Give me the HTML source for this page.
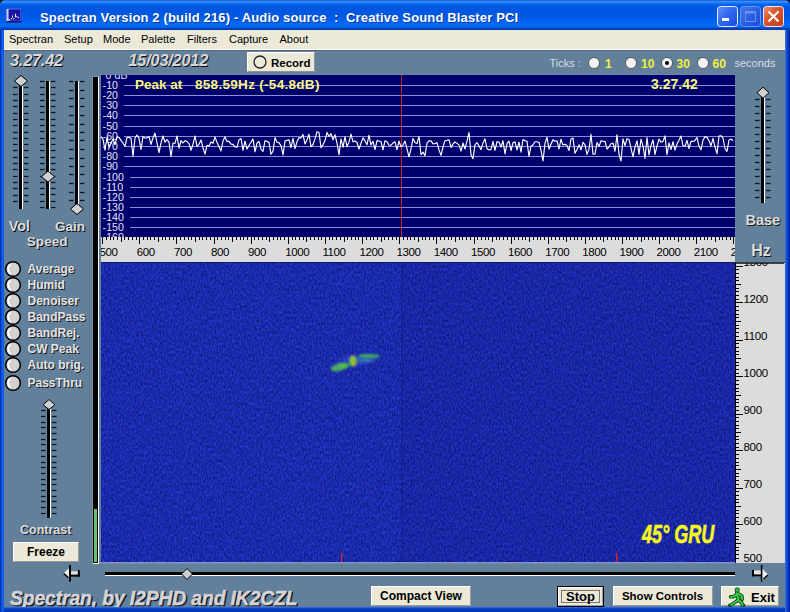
<!DOCTYPE html>
<html><head><meta charset="utf-8"><style>
html,body{margin:0;padding:0;width:790px;height:612px;overflow:hidden;background:#0a4fd8}
svg{position:absolute;left:0;top:0;display:block}
text{font-family:"Liberation Sans",sans-serif;white-space:pre}
</style></head><body>
<svg width="790" height="612" viewBox="0 0 790 612">
<defs>
<linearGradient id="tb" x1="0" y1="0" x2="0" y2="30" gradientUnits="userSpaceOnUse"><stop offset="0.0000" stop-color="#0040b8"/><stop offset="0.0333" stop-color="#3a8ff8"/><stop offset="0.0667" stop-color="#3088fc"/><stop offset="0.1000" stop-color="#1a78f8"/><stop offset="0.1333" stop-color="#0a68f0"/><stop offset="0.2000" stop-color="#005ae4"/><stop offset="0.3333" stop-color="#0056e0"/><stop offset="0.5333" stop-color="#0058e4"/><stop offset="0.6333" stop-color="#005ee8"/><stop offset="0.7333" stop-color="#0064f4"/><stop offset="0.8333" stop-color="#066afc"/><stop offset="0.8833" stop-color="#0668f8"/><stop offset="0.9167" stop-color="#0058e0"/><stop offset="0.9500" stop-color="#0044c0"/><stop offset="1.0000" stop-color="#0038a8"/></linearGradient>
<filter id="noise" x="0" y="0" width="100%" height="100%" color-interpolation-filters="sRGB">
<feTurbulence type="fractalNoise" baseFrequency="0.65 0.35" numOctaves="2" seed="5"/>
<feColorMatrix type="matrix" values="0.14 0 0 0 0.035  0.22 0 0 0 0.055  0.6 0 0 0 0.37  0 0 0 0 1"/>
</filter>
<radialGradient id="blob" cx="0.5" cy="0.5" r="0.5"><stop offset="0" stop-color="#c8d020"/><stop offset="0.5" stop-color="#40c040"/><stop offset="1" stop-color="#40c040" stop-opacity="0"/></radialGradient>
<linearGradient id="bmin" x1="0" y1="0" x2="1" y2="1"><stop offset="0" stop-color="#6894f8"/><stop offset="0.45" stop-color="#3068f0"/><stop offset="1" stop-color="#1a4ee0"/></linearGradient>
<linearGradient id="bmax" x1="0" y1="0" x2="1" y2="1"><stop offset="0" stop-color="#4a78ec"/><stop offset="0.5" stop-color="#2a5ee4"/><stop offset="1" stop-color="#1a50dc"/></linearGradient>
<linearGradient id="bcls" x1="0" y1="0" x2="1" y2="1"><stop offset="0" stop-color="#f09070"/><stop offset="0.4" stop-color="#dc5830"/><stop offset="1" stop-color="#c03c18"/></linearGradient>
<clipPath id="rrc"><rect x="736" y="263" width="50" height="300"/></clipPath><clipPath id="frc"><rect x="101" y="237" width="634" height="25"/></clipPath><clipPath id="spc"><rect x="101" y="75" width="634" height="162"/></clipPath>
</defs>
<rect x="0" y="0" width="790" height="612" fill="#0a4fd8"/>
<rect x="0" y="0" width="790" height="30" fill="url(#tb)"/>
<path d="M0,0 H4 Q1,1 0,4 Z" fill="#101830"/><path d="M790,0 H786 Q789,1 790,4 Z" fill="#101830"/>
<!-- icon -->
<rect x="6.5" y="8.5" width="14.5" height="13.5" fill="#5868d8"/>
<rect x="6.5" y="9" width="2.2" height="13" fill="#c4ccf4"/>
<rect x="8.7" y="9.6" width="11.6" height="10.8" fill="#1a12a8"/>
<rect x="6.5" y="21" width="15" height="1.5" fill="#0c1660"/>
<g fill="#fff"><rect x="8.5" y="19" width="1.3" height="1.3"/><rect x="10.8" y="18" width="1.2" height="1.2"/><rect x="12" y="15.5" width="1" height="2"/><rect x="13.3" y="18" width="1.2" height="1.2"/><rect x="15" y="13.8" width="1.1" height="3.5"/><rect x="16.3" y="16" width="1.1" height="1.2"/><rect x="17.8" y="17" width="1.2" height="1.2"/></g>
<text x="41" y="22.5" font-size="13" font-weight="bold" fill="#00207a" opacity="0.6" letter-spacing="0.15">Spectran Version 2 (build 216) - Audio source  :  Creative Sound Blaster PCI</text>
<text x="40" y="21.5" font-size="13" font-weight="bold" fill="#ffffff" letter-spacing="0.15">Spectran Version 2 (build 216) - Audio source  :  Creative Sound Blaster PCI</text>
<!-- buttons -->
<rect x="717.5" y="6.5" width="20" height="20" rx="3" fill="url(#bmin)" stroke="#e8f0ff" stroke-width="1"/>
<rect x="722" y="18" width="7" height="3" fill="#fff"/>
<rect x="740.5" y="6.5" width="20" height="20" rx="3" fill="url(#bmax)" stroke="#6c90e8" stroke-width="1"/>
<rect x="745.5" y="11.5" width="10" height="10" fill="none" stroke="#6c90e8" stroke-width="1"/><rect x="745.5" y="11.5" width="10" height="2" fill="#6c90e8"/>
<rect x="763.5" y="6.5" width="20" height="20" rx="3" fill="url(#bcls)" stroke="#f4e8e8" stroke-width="1"/>
<path d="M768.5,11.5 L778.5,21.5 M778.5,11.5 L768.5,21.5" stroke="#fff" stroke-width="2"/>
<!-- menubar -->
<rect x="4" y="30" width="782" height="20" fill="#ece9d8"/>
<g font-size="11" fill="#000">
<text x="9" y="43">Spectran</text><text x="64" y="43">Setup</text><text x="103" y="43">Mode</text><text x="141" y="43">Palette</text><text x="187" y="43">Filters</text><text x="229" y="43">Capture</text><text x="279.5" y="43">About</text>
</g>
<!-- client -->
<rect x="4" y="50" width="782" height="557" fill="#62809a"/>
<rect x="4" y="49" width="782" height="1" fill="#fcfcf8"/><rect x="4" y="50" width="782" height="1" fill="#586878"/>
<text x="11" y="67" font-size="16.3" fill="#101014" font-weight="bold" font-style="italic" letter-spacing="-0.2">3.27.42</text><text x="10" y="66" font-size="16.3" fill="#d8d8dc" font-weight="bold" font-style="italic" letter-spacing="-0.2">3.27.42</text>
<text x="129.5" y="67" font-size="16.3" fill="#101014" font-weight="bold" font-style="italic" letter-spacing="-0.2">15/03/2012</text><text x="128.5" y="66" font-size="16.3" fill="#d8d8dc" font-weight="bold" font-style="italic" letter-spacing="-0.2">15/03/2012</text>
<rect x="247" y="52" width="68" height="20" fill="#ece9d8"/>
<path d="M247.5,71.5 V52.5 H314.5" stroke="#fff" fill="none"/><path d="M247.5,71.5 H314.5 V52.5" stroke="#909090" fill="none"/>
<circle cx="260" cy="62" r="6" fill="#ece9d8" stroke="#202020" stroke-width="1.3"/>
<text x="271" y="66.5" font-size="11.5" font-weight="bold" fill="#000">Record</text>
<text x="549.5" y="67" font-size="11" fill="#d8dce4">Ticks :</text>
<g fill="#f4f4f4" stroke="#404040" stroke-width="0.8">
<circle cx="594" cy="63" r="5.5"/><circle cx="631" cy="63" r="5.5"/><circle cx="667" cy="63" r="5.5"/><circle cx="703" cy="63" r="5.5"/>
</g>
<circle cx="667" cy="63" r="2" fill="#000"/>
<g font-size="12" font-weight="bold" fill="#f0f040">
<text x="605" y="67.5">1</text><text x="641" y="67.5">10</text><text x="676.5" y="67.5">30</text><text x="712.5" y="67.5">60</text>
</g>
<text x="734.5" y="66.5" font-size="11" fill="#d8dce4">seconds</text>
<!-- left black bar -->
<rect x="92" y="76" width="7" height="488" fill="#8494a8"/>
<rect x="93" y="77" width="5" height="486" fill="#000"/>
<rect x="98" y="77" width="1" height="486" fill="#fff"/>
<rect x="93" y="563" width="6" height="1" fill="#fff"/>
<rect x="94" y="509" width="3" height="53" fill="#6cc070"/>
<!-- spectrum -->
<rect x="100" y="74" width="636" height="1" fill="#7080b4"/><rect x="734" y="75" width="1" height="162" fill="#000030"/>
<rect x="101" y="75" width="634" height="162" fill="#00006c"/>
<g stroke="#8c8cd8" stroke-width="1"><line x1="101" y1="85.5" x2="735" y2="85.5"/><line x1="101" y1="95.5" x2="735" y2="95.5"/><line x1="101" y1="105.5" x2="735" y2="105.5"/><line x1="101" y1="115.5" x2="735" y2="115.5"/><line x1="101" y1="126.5" x2="735" y2="126.5"/><line x1="101" y1="136.5" x2="735" y2="136.5"/><line x1="101" y1="146.5" x2="735" y2="146.5"/><line x1="101" y1="156.5" x2="735" y2="156.5"/><line x1="101" y1="166.5" x2="735" y2="166.5"/><line x1="101" y1="177.5" x2="735" y2="177.5"/><line x1="101" y1="187.5" x2="735" y2="187.5"/><line x1="101" y1="197.5" x2="735" y2="197.5"/><line x1="101" y1="207.5" x2="735" y2="207.5"/><line x1="101" y1="217.5" x2="735" y2="217.5"/><line x1="101" y1="227.5" x2="735" y2="227.5"/></g>
<line x1="401.5" y1="75" x2="401.5" y2="237" stroke="#c02020" stroke-width="1"/>
<g font-size="10.6" fill="#e0e0f8" clip-path="url(#spc)" letter-spacing="0.1"><rect x="101" y="70.5" width="29" height="9" fill="#00006c"/><text x="105.5" y="79.3">0 dB</text><rect x="101" y="80.5" width="23" height="9" fill="#00006c"/><text x="102.5" y="89.3">-10</text><rect x="101" y="90.5" width="23" height="9" fill="#00006c"/><text x="102.5" y="99.3">-20</text><rect x="101" y="100.5" width="23" height="9" fill="#00006c"/><text x="102.5" y="109.3">-30</text><rect x="101" y="110.5" width="23" height="9" fill="#00006c"/><text x="102.5" y="119.3">-40</text><rect x="101" y="121.5" width="23" height="9" fill="#00006c"/><text x="102.5" y="130.3">-50</text><rect x="101" y="131.5" width="23" height="9" fill="#00006c"/><text x="102.5" y="140.3">-60</text><rect x="101" y="141.5" width="23" height="9" fill="#00006c"/><text x="102.5" y="150.3">-70</text><rect x="101" y="151.5" width="23" height="9" fill="#00006c"/><text x="102.5" y="160.3">-80</text><rect x="101" y="161.5" width="23" height="9" fill="#00006c"/><text x="102.5" y="170.3">-90</text><rect x="101" y="172.5" width="29" height="9" fill="#00006c"/><text x="102.5" y="181.3">-100</text><rect x="101" y="182.5" width="29" height="9" fill="#00006c"/><text x="102.5" y="191.3">-110</text><rect x="101" y="192.5" width="29" height="9" fill="#00006c"/><text x="102.5" y="201.3">-120</text><rect x="101" y="202.5" width="29" height="9" fill="#00006c"/><text x="102.5" y="211.3">-130</text><rect x="101" y="212.5" width="29" height="9" fill="#00006c"/><text x="102.5" y="221.3">-140</text><rect x="101" y="222.5" width="29" height="9" fill="#00006c"/><text x="102.5" y="231.3">-150</text><rect x="101" y="232.5" width="29" height="9" fill="#00006c"/><text x="102.5" y="241.3">-160</text></g>
<polyline points="101.0,136.6 103.0,139.4 105.0,150.1 107.0,137.3 109.0,147.2 111.0,143.3 113.0,138.9 115.0,144.8 117.0,136.8 119.0,137.4 121.0,140.4 123.0,143.2 125.0,146.2 127.0,137.5 129.0,137.4 131.0,138.2 133.0,156.3 135.0,138.0 137.0,135.1 139.0,138.3 141.0,149.5 143.0,136.7 145.0,138.1 147.0,137.8 149.0,136.7 151.0,144.4 153.0,138.0 155.0,133.2 157.0,143.0 159.0,152.6 161.0,142.9 163.0,136.0 165.0,142.2 167.0,139.5 169.0,142.1 171.0,156.4 173.0,143.0 175.0,143.3 177.0,136.0 179.0,148.2 181.0,140.5 183.0,143.0 185.0,140.6 187.0,141.7 189.0,143.6 191.0,150.3 193.0,144.2 195.0,136.0 197.0,146.3 199.0,144.3 201.0,139.9 203.0,147.7 205.0,154.1 207.0,145.3 209.0,146.0 211.0,142.0 213.0,143.3 215.0,137.0 217.0,142.4 219.0,146.6 221.0,151.0 223.0,141.0 225.0,136.8 227.0,141.4 229.0,141.3 231.0,144.2 233.0,144.4 235.0,146.9 237.0,147.2 239.0,139.9 241.0,138.5 243.0,150.4 245.0,141.2 247.0,149.1 249.0,145.4 251.0,142.3 253.0,138.9 255.0,151.8 257.0,143.0 259.0,141.5 261.0,149.1 263.0,151.5 265.0,140.5 267.0,141.6 269.0,142.4 271.0,154.3 273.0,151.1 275.0,137.6 277.0,141.9 279.0,142.8 281.0,145.7 283.0,154.9 285.0,141.1 287.0,140.3 289.0,139.9 291.0,147.5 293.0,138.4 295.0,148.6 297.0,141.8 299.0,137.7 301.0,137.9 303.0,134.6 305.0,143.9 307.0,139.8 309.0,134.3 311.0,146.8 313.0,144.5 315.0,138.9 317.0,131.7 319.0,132.6 321.0,147.7 323.0,144.6 325.0,140.8 327.0,132.4 329.0,136.5 331.0,133.7 333.0,139.9 335.0,134.7 337.0,143.1 339.0,154.7 341.0,138.8 343.0,147.1 345.0,136.8 347.0,146.6 349.0,142.2 351.0,134.1 353.0,141.8 355.0,141.0 357.0,142.5 359.0,149.0 361.0,143.2 363.0,137.9 365.0,140.9 367.0,144.7 369.0,135.3 371.0,145.1 373.0,141.3 375.0,149.6 377.0,140.6 379.0,141.0 381.0,141.5 383.0,149.8 385.0,140.7 387.0,141.8 389.0,145.2 391.0,145.1 393.0,143.1 395.0,141.8 397.0,149.6 399.0,141.1 401.0,146.8 403.0,145.1 405.0,141.0 407.0,148.8 409.0,156.9 411.0,148.9 413.0,138.6 415.0,142.6 417.0,143.6 419.0,136.3 421.0,154.7 423.0,152.1 425.0,155.6 427.0,143.2 429.0,140.9 431.0,140.9 433.0,143.8 435.0,143.7 437.0,142.6 439.0,149.9 441.0,155.4 443.0,147.0 445.0,140.7 447.0,140.3 449.0,139.7 451.0,147.4 453.0,144.0 455.0,142.0 457.0,143.4 459.0,144.9 461.0,151.1 463.0,143.0 465.0,149.0 467.0,141.1 469.0,132.5 471.0,154.7 473.0,158.7 475.0,144.6 477.0,142.6 479.0,146.0 481.0,149.6 483.0,143.0 485.0,138.8 487.0,148.8 489.0,150.0 491.0,149.4 493.0,141.5 495.0,150.3 497.0,141.6 499.0,142.2 501.0,147.0 503.0,140.8 505.0,153.9 507.0,143.6 509.0,141.2 511.0,150.5 513.0,142.6 515.0,141.8 517.0,149.9 519.0,142.2 521.0,152.2 523.0,139.5 525.0,140.8 527.0,141.4 529.0,156.5 531.0,146.2 533.0,144.8 535.0,141.7 537.0,141.7 539.0,142.5 541.0,150.4 543.0,161.0 545.0,143.4 547.0,137.3 549.0,149.2 551.0,144.0 553.0,139.7 555.0,141.2 557.0,140.8 559.0,149.0 561.0,139.2 563.0,145.1 565.0,144.2 567.0,145.5 569.0,150.5 571.0,139.0 573.0,138.1 575.0,153.3 577.0,149.4 579.0,144.8 581.0,149.8 583.0,142.3 585.0,144.9 587.0,154.3 589.0,149.4 591.0,134.4 593.0,154.1 595.0,154.0 597.0,142.6 599.0,146.3 601.0,140.9 603.0,141.3 605.0,141.4 607.0,149.1 609.0,146.8 611.0,143.8 613.0,143.0 615.0,151.3 617.0,134.9 619.0,154.3 621.0,161.0 623.0,138.9 625.0,145.7 627.0,138.7 629.0,139.5 631.0,148.1 633.0,156.8 635.0,147.2 637.0,140.8 639.0,154.4 641.0,139.2 643.0,146.2 645.0,158.5 647.0,137.5 649.0,154.8 651.0,145.5 653.0,139.9 655.0,154.4 657.0,145.9 659.0,139.1 661.0,142.2 663.0,141.4 665.0,135.9 667.0,154.7 669.0,142.8 671.0,149.5 673.0,141.7 675.0,150.1 677.0,144.0 679.0,140.2 681.0,136.0 683.0,145.8 685.0,146.2 687.0,140.4 689.0,148.5 691.0,141.3 693.0,141.4 695.0,140.4 697.0,137.5 699.0,146.3 701.0,149.7 703.0,140.2 705.0,136.6 707.0,137.4 709.0,140.8 711.0,145.8 713.0,138.3 715.0,146.9 717.0,153.6 719.0,136.0 721.0,135.7 723.0,138.2 725.0,148.5 727.0,151.3 729.0,139.9 731.0,139.0 733.0,140.9" fill="none" stroke="#fff" stroke-width="1.15" stroke-linejoin="round"/>
<text x="135" y="89" font-size="13.5" font-weight="bold" fill="#f8f880">Peak at</text>
<text x="195" y="89" font-size="13.5" font-weight="bold" fill="#f8f880" letter-spacing="0.3">858.59Hz (-54.8dB)</text>
<text x="651" y="89" font-size="14" font-weight="bold" fill="#f8f880">3.27.42</text>
<!-- freq ruler -->
<rect x="101" y="237" width="634" height="25" fill="#dcdcdc"/>
<g stroke="#000" stroke-width="1"><line x1="102.5" y1="237" x2="102.5" y2="244"/><line x1="106.5" y1="237" x2="106.5" y2="240"/><line x1="110.5" y1="237" x2="110.5" y2="240"/><line x1="113.5" y1="237" x2="113.5" y2="240"/><line x1="117.5" y1="237" x2="117.5" y2="240"/><line x1="121.5" y1="237" x2="121.5" y2="242"/><line x1="124.5" y1="237" x2="124.5" y2="240"/><line x1="128.5" y1="237" x2="128.5" y2="240"/><line x1="132.5" y1="237" x2="132.5" y2="240"/><line x1="136.5" y1="237" x2="136.5" y2="240"/><line x1="139.5" y1="237" x2="139.5" y2="244"/><line x1="143.5" y1="237" x2="143.5" y2="240"/><line x1="147.5" y1="237" x2="147.5" y2="240"/><line x1="150.5" y1="237" x2="150.5" y2="240"/><line x1="154.5" y1="237" x2="154.5" y2="240"/><line x1="158.5" y1="237" x2="158.5" y2="242"/><line x1="162.5" y1="237" x2="162.5" y2="240"/><line x1="165.5" y1="237" x2="165.5" y2="240"/><line x1="169.5" y1="237" x2="169.5" y2="240"/><line x1="173.5" y1="237" x2="173.5" y2="240"/><line x1="176.5" y1="237" x2="176.5" y2="244"/><line x1="180.5" y1="237" x2="180.5" y2="240"/><line x1="184.5" y1="237" x2="184.5" y2="240"/><line x1="188.5" y1="237" x2="188.5" y2="240"/><line x1="191.5" y1="237" x2="191.5" y2="240"/><line x1="195.5" y1="237" x2="195.5" y2="242"/><line x1="199.5" y1="237" x2="199.5" y2="240"/><line x1="202.5" y1="237" x2="202.5" y2="240"/><line x1="206.5" y1="237" x2="206.5" y2="240"/><line x1="210.5" y1="237" x2="210.5" y2="240"/><line x1="214.5" y1="237" x2="214.5" y2="244"/><line x1="217.5" y1="237" x2="217.5" y2="240"/><line x1="221.5" y1="237" x2="221.5" y2="240"/><line x1="225.5" y1="237" x2="225.5" y2="240"/><line x1="228.5" y1="237" x2="228.5" y2="240"/><line x1="232.5" y1="237" x2="232.5" y2="242"/><line x1="236.5" y1="237" x2="236.5" y2="240"/><line x1="240.5" y1="237" x2="240.5" y2="240"/><line x1="243.5" y1="237" x2="243.5" y2="240"/><line x1="247.5" y1="237" x2="247.5" y2="240"/><line x1="251.5" y1="237" x2="251.5" y2="244"/><line x1="254.5" y1="237" x2="254.5" y2="240"/><line x1="258.5" y1="237" x2="258.5" y2="240"/><line x1="262.5" y1="237" x2="262.5" y2="240"/><line x1="266.5" y1="237" x2="266.5" y2="240"/><line x1="269.5" y1="237" x2="269.5" y2="242"/><line x1="273.5" y1="237" x2="273.5" y2="240"/><line x1="277.5" y1="237" x2="277.5" y2="240"/><line x1="280.5" y1="237" x2="280.5" y2="240"/><line x1="284.5" y1="237" x2="284.5" y2="240"/><line x1="288.5" y1="237" x2="288.5" y2="244"/><line x1="292.5" y1="237" x2="292.5" y2="240"/><line x1="295.5" y1="237" x2="295.5" y2="240"/><line x1="299.5" y1="237" x2="299.5" y2="240"/><line x1="303.5" y1="237" x2="303.5" y2="240"/><line x1="306.5" y1="237" x2="306.5" y2="242"/><line x1="310.5" y1="237" x2="310.5" y2="240"/><line x1="314.5" y1="237" x2="314.5" y2="240"/><line x1="318.5" y1="237" x2="318.5" y2="240"/><line x1="321.5" y1="237" x2="321.5" y2="240"/><line x1="325.5" y1="237" x2="325.5" y2="244"/><line x1="329.5" y1="237" x2="329.5" y2="240"/><line x1="332.5" y1="237" x2="332.5" y2="240"/><line x1="336.5" y1="237" x2="336.5" y2="240"/><line x1="340.5" y1="237" x2="340.5" y2="240"/><line x1="344.5" y1="237" x2="344.5" y2="242"/><line x1="347.5" y1="237" x2="347.5" y2="240"/><line x1="351.5" y1="237" x2="351.5" y2="240"/><line x1="355.5" y1="237" x2="355.5" y2="240"/><line x1="358.5" y1="237" x2="358.5" y2="240"/><line x1="362.5" y1="237" x2="362.5" y2="244"/><line x1="366.5" y1="237" x2="366.5" y2="240"/><line x1="370.5" y1="237" x2="370.5" y2="240"/><line x1="373.5" y1="237" x2="373.5" y2="240"/><line x1="377.5" y1="237" x2="377.5" y2="240"/><line x1="381.5" y1="237" x2="381.5" y2="242"/><line x1="384.5" y1="237" x2="384.5" y2="240"/><line x1="388.5" y1="237" x2="388.5" y2="240"/><line x1="392.5" y1="237" x2="392.5" y2="240"/><line x1="396.5" y1="237" x2="396.5" y2="240"/><line x1="399.5" y1="237" x2="399.5" y2="244"/><line x1="403.5" y1="237" x2="403.5" y2="240"/><line x1="407.5" y1="237" x2="407.5" y2="240"/><line x1="410.5" y1="237" x2="410.5" y2="240"/><line x1="414.5" y1="237" x2="414.5" y2="240"/><line x1="418.5" y1="237" x2="418.5" y2="242"/><line x1="422.5" y1="237" x2="422.5" y2="240"/><line x1="425.5" y1="237" x2="425.5" y2="240"/><line x1="429.5" y1="237" x2="429.5" y2="240"/><line x1="433.5" y1="237" x2="433.5" y2="240"/><line x1="436.5" y1="237" x2="436.5" y2="244"/><line x1="440.5" y1="237" x2="440.5" y2="240"/><line x1="444.5" y1="237" x2="444.5" y2="240"/><line x1="448.5" y1="237" x2="448.5" y2="240"/><line x1="451.5" y1="237" x2="451.5" y2="240"/><line x1="455.5" y1="237" x2="455.5" y2="242"/><line x1="459.5" y1="237" x2="459.5" y2="240"/><line x1="462.5" y1="237" x2="462.5" y2="240"/><line x1="466.5" y1="237" x2="466.5" y2="240"/><line x1="470.5" y1="237" x2="470.5" y2="240"/><line x1="474.5" y1="237" x2="474.5" y2="244"/><line x1="477.5" y1="237" x2="477.5" y2="240"/><line x1="481.5" y1="237" x2="481.5" y2="240"/><line x1="485.5" y1="237" x2="485.5" y2="240"/><line x1="488.5" y1="237" x2="488.5" y2="240"/><line x1="492.5" y1="237" x2="492.5" y2="242"/><line x1="496.5" y1="237" x2="496.5" y2="240"/><line x1="499.5" y1="237" x2="499.5" y2="240"/><line x1="503.5" y1="237" x2="503.5" y2="240"/><line x1="507.5" y1="237" x2="507.5" y2="240"/><line x1="511.5" y1="237" x2="511.5" y2="244"/><line x1="514.5" y1="237" x2="514.5" y2="240"/><line x1="518.5" y1="237" x2="518.5" y2="240"/><line x1="522.5" y1="237" x2="522.5" y2="240"/><line x1="525.5" y1="237" x2="525.5" y2="240"/><line x1="529.5" y1="237" x2="529.5" y2="242"/><line x1="533.5" y1="237" x2="533.5" y2="240"/><line x1="537.5" y1="237" x2="537.5" y2="240"/><line x1="540.5" y1="237" x2="540.5" y2="240"/><line x1="544.5" y1="237" x2="544.5" y2="240"/><line x1="548.5" y1="237" x2="548.5" y2="244"/><line x1="551.5" y1="237" x2="551.5" y2="240"/><line x1="555.5" y1="237" x2="555.5" y2="240"/><line x1="559.5" y1="237" x2="559.5" y2="240"/><line x1="563.5" y1="237" x2="563.5" y2="240"/><line x1="566.5" y1="237" x2="566.5" y2="242"/><line x1="570.5" y1="237" x2="570.5" y2="240"/><line x1="574.5" y1="237" x2="574.5" y2="240"/><line x1="577.5" y1="237" x2="577.5" y2="240"/><line x1="581.5" y1="237" x2="581.5" y2="240"/><line x1="585.5" y1="237" x2="585.5" y2="244"/><line x1="589.5" y1="237" x2="589.5" y2="240"/><line x1="592.5" y1="237" x2="592.5" y2="240"/><line x1="596.5" y1="237" x2="596.5" y2="240"/><line x1="600.5" y1="237" x2="600.5" y2="240"/><line x1="603.5" y1="237" x2="603.5" y2="242"/><line x1="607.5" y1="237" x2="607.5" y2="240"/><line x1="611.5" y1="237" x2="611.5" y2="240"/><line x1="615.5" y1="237" x2="615.5" y2="240"/><line x1="618.5" y1="237" x2="618.5" y2="240"/><line x1="622.5" y1="237" x2="622.5" y2="244"/><line x1="626.5" y1="237" x2="626.5" y2="240"/><line x1="629.5" y1="237" x2="629.5" y2="240"/><line x1="633.5" y1="237" x2="633.5" y2="240"/><line x1="637.5" y1="237" x2="637.5" y2="240"/><line x1="641.5" y1="237" x2="641.5" y2="242"/><line x1="644.5" y1="237" x2="644.5" y2="240"/><line x1="648.5" y1="237" x2="648.5" y2="240"/><line x1="652.5" y1="237" x2="652.5" y2="240"/><line x1="655.5" y1="237" x2="655.5" y2="240"/><line x1="659.5" y1="237" x2="659.5" y2="244"/><line x1="663.5" y1="237" x2="663.5" y2="240"/><line x1="667.5" y1="237" x2="667.5" y2="240"/><line x1="670.5" y1="237" x2="670.5" y2="240"/><line x1="674.5" y1="237" x2="674.5" y2="240"/><line x1="678.5" y1="237" x2="678.5" y2="242"/><line x1="681.5" y1="237" x2="681.5" y2="240"/><line x1="685.5" y1="237" x2="685.5" y2="240"/><line x1="689.5" y1="237" x2="689.5" y2="240"/><line x1="693.5" y1="237" x2="693.5" y2="240"/><line x1="696.5" y1="237" x2="696.5" y2="244"/><line x1="700.5" y1="237" x2="700.5" y2="240"/><line x1="704.5" y1="237" x2="704.5" y2="240"/><line x1="707.5" y1="237" x2="707.5" y2="240"/><line x1="711.5" y1="237" x2="711.5" y2="240"/><line x1="715.5" y1="237" x2="715.5" y2="242"/><line x1="719.5" y1="237" x2="719.5" y2="240"/><line x1="722.5" y1="237" x2="722.5" y2="240"/><line x1="726.5" y1="237" x2="726.5" y2="240"/><line x1="730.5" y1="237" x2="730.5" y2="240"/><line x1="733.5" y1="237" x2="733.5" y2="244"/></g>
<g font-size="11.5" fill="#000" clip-path="url(#frc)" letter-spacing="-0.4"><text x="99.6" y="256">500</text><text x="136.7" y="256">600</text><text x="173.9" y="256">700</text><text x="211.0" y="256">800</text><text x="248.1" y="256">900</text><text x="285.2" y="256">1000</text><text x="322.4" y="256">1100</text><text x="359.5" y="256">1200</text><text x="396.6" y="256">1300</text><text x="433.8" y="256">1400</text><text x="470.9" y="256">1500</text><text x="508.0" y="256">1600</text><text x="545.2" y="256">1700</text><text x="582.3" y="256">1800</text><text x="619.4" y="256">1900</text><text x="656.6" y="256">2000</text><text x="693.7" y="256">2100</text><text x="730.8" y="256">2200</text></g>
<!-- waterfall -->
<rect x="101" y="262" width="634" height="300" fill="#2236c0" filter="url(#noise)"/>
<rect x="401" y="262" width="334" height="300" fill="#000040" opacity="0.06"/>
<rect x="101" y="262" width="634" height="1" fill="#10186a"/>
<rect x="401" y="262" width="2" height="300" fill="#101a80" opacity="0.35"/>
<filter id="blur1" x="-50%" y="-100%" width="200%" height="300%"><feGaussianBlur stdDeviation="1.2"/></filter>
<g filter="url(#blur1)">
<ellipse cx="358" cy="360" rx="22" ry="6" fill="#3a78e0" opacity="0.25" transform="rotate(-8 358 360)"/>
<ellipse cx="340" cy="367" rx="9.5" ry="3.6" fill="#58c840" opacity="0.9" transform="rotate(-14 340 367)"/>
<ellipse cx="337" cy="368" rx="2" ry="1.2" fill="#3070c0" opacity="0.6"/>
<ellipse cx="369" cy="356" rx="11" ry="1.7" fill="#48c040" opacity="0.9"/>
<ellipse cx="365" cy="360.5" rx="9" ry="1.4" fill="#40b8a0" opacity="0.6"/>
<ellipse cx="353" cy="361" rx="3.8" ry="5.5" fill="#70c838"/>
<circle cx="352" cy="357.5" r="1.6" fill="#e0a030"/>
<circle cx="354.5" cy="364" r="1.6" fill="#d89030"/>
</g>
<rect x="100" y="562" width="636" height="1.5" fill="#8890c8"/>
<rect x="341" y="553" width="1.5" height="9" fill="#d02030"/>
<rect x="616" y="553" width="1.5" height="9" fill="#d02030"/>
<text x="642" y="543" font-size="25" font-weight="bold" font-style="italic" fill="#f8f818" stroke="#f8f818" stroke-width="0.6" transform="translate(642 0) scale(0.72 1) translate(-642 0)">45° GRU</text>
<!-- right ruler -->
<rect x="735" y="263" width="49" height="300" fill="#dcdcdc"/>
<rect x="735" y="263" width="1" height="300" fill="#000"/>
<g stroke="#000" stroke-width="1"><line x1="736" y1="266.5" x2="743" y2="266.5"/><line x1="736" y1="269.5" x2="739" y2="269.5"/><line x1="736" y1="273.5" x2="739" y2="273.5"/><line x1="736" y1="277.5" x2="739" y2="277.5"/><line x1="736" y1="280.5" x2="739" y2="280.5"/><line x1="736" y1="284.5" x2="741" y2="284.5"/><line x1="736" y1="288.5" x2="739" y2="288.5"/><line x1="736" y1="291.5" x2="739" y2="291.5"/><line x1="736" y1="295.5" x2="739" y2="295.5"/><line x1="736" y1="299.5" x2="739" y2="299.5"/><line x1="736" y1="302.5" x2="743" y2="302.5"/><line x1="736" y1="306.5" x2="739" y2="306.5"/><line x1="736" y1="310.5" x2="739" y2="310.5"/><line x1="736" y1="314.5" x2="739" y2="314.5"/><line x1="736" y1="317.5" x2="739" y2="317.5"/><line x1="736" y1="321.5" x2="741" y2="321.5"/><line x1="736" y1="325.5" x2="739" y2="325.5"/><line x1="736" y1="328.5" x2="739" y2="328.5"/><line x1="736" y1="332.5" x2="739" y2="332.5"/><line x1="736" y1="336.5" x2="739" y2="336.5"/><line x1="736" y1="340.5" x2="743" y2="340.5"/><line x1="736" y1="343.5" x2="739" y2="343.5"/><line x1="736" y1="347.5" x2="739" y2="347.5"/><line x1="736" y1="351.5" x2="739" y2="351.5"/><line x1="736" y1="354.5" x2="739" y2="354.5"/><line x1="736" y1="358.5" x2="741" y2="358.5"/><line x1="736" y1="362.5" x2="739" y2="362.5"/><line x1="736" y1="365.5" x2="739" y2="365.5"/><line x1="736" y1="369.5" x2="739" y2="369.5"/><line x1="736" y1="373.5" x2="739" y2="373.5"/><line x1="736" y1="376.5" x2="743" y2="376.5"/><line x1="736" y1="380.5" x2="739" y2="380.5"/><line x1="736" y1="384.5" x2="739" y2="384.5"/><line x1="736" y1="388.5" x2="739" y2="388.5"/><line x1="736" y1="391.5" x2="739" y2="391.5"/><line x1="736" y1="395.5" x2="741" y2="395.5"/><line x1="736" y1="399.5" x2="739" y2="399.5"/><line x1="736" y1="402.5" x2="739" y2="402.5"/><line x1="736" y1="406.5" x2="739" y2="406.5"/><line x1="736" y1="410.5" x2="739" y2="410.5"/><line x1="736" y1="414.5" x2="743" y2="414.5"/><line x1="736" y1="417.5" x2="739" y2="417.5"/><line x1="736" y1="421.5" x2="739" y2="421.5"/><line x1="736" y1="425.5" x2="739" y2="425.5"/><line x1="736" y1="428.5" x2="739" y2="428.5"/><line x1="736" y1="432.5" x2="741" y2="432.5"/><line x1="736" y1="436.5" x2="739" y2="436.5"/><line x1="736" y1="439.5" x2="739" y2="439.5"/><line x1="736" y1="443.5" x2="739" y2="443.5"/><line x1="736" y1="447.5" x2="739" y2="447.5"/><line x1="736" y1="450.5" x2="743" y2="450.5"/><line x1="736" y1="454.5" x2="739" y2="454.5"/><line x1="736" y1="458.5" x2="739" y2="458.5"/><line x1="736" y1="462.5" x2="739" y2="462.5"/><line x1="736" y1="465.5" x2="739" y2="465.5"/><line x1="736" y1="469.5" x2="741" y2="469.5"/><line x1="736" y1="473.5" x2="739" y2="473.5"/><line x1="736" y1="476.5" x2="739" y2="476.5"/><line x1="736" y1="480.5" x2="739" y2="480.5"/><line x1="736" y1="484.5" x2="739" y2="484.5"/><line x1="736" y1="488.5" x2="743" y2="488.5"/><line x1="736" y1="491.5" x2="739" y2="491.5"/><line x1="736" y1="495.5" x2="739" y2="495.5"/><line x1="736" y1="499.5" x2="739" y2="499.5"/><line x1="736" y1="502.5" x2="739" y2="502.5"/><line x1="736" y1="506.5" x2="741" y2="506.5"/><line x1="736" y1="510.5" x2="739" y2="510.5"/><line x1="736" y1="513.5" x2="739" y2="513.5"/><line x1="736" y1="517.5" x2="739" y2="517.5"/><line x1="736" y1="521.5" x2="739" y2="521.5"/><line x1="736" y1="524.5" x2="743" y2="524.5"/><line x1="736" y1="528.5" x2="739" y2="528.5"/><line x1="736" y1="532.5" x2="739" y2="532.5"/><line x1="736" y1="536.5" x2="739" y2="536.5"/><line x1="736" y1="539.5" x2="739" y2="539.5"/><line x1="736" y1="543.5" x2="741" y2="543.5"/><line x1="736" y1="547.5" x2="739" y2="547.5"/><line x1="736" y1="550.5" x2="739" y2="550.5"/><line x1="736" y1="554.5" x2="739" y2="554.5"/><line x1="736" y1="558.5" x2="739" y2="558.5"/></g>
<g font-size="11.5" fill="#000" clip-path="url(#rrc)" letter-spacing="-0.3"><text x="743.5" y="266.0">1300</text><text x="743.5" y="303.0">1200</text><text x="743.5" y="340.0">1100</text><text x="743.5" y="377.0">1000</text><text x="743.5" y="414.0">900</text><text x="743.5" y="451.0">800</text><text x="743.5" y="488.0">700</text><text x="743.5" y="525.0">600</text><text x="743.5" y="562.0">500</text></g>
<rect x="735" y="250" width="51" height="13" fill="#62809a"/>
<rect x="735" y="262.5" width="50" height="1.2" fill="#000"/>
<!-- sliders -->
<g stroke="#0c1424" stroke-width="1.3"><line x1="13" y1="87.5" x2="17.5" y2="87.5"/><line x1="24" y1="87.5" x2="28.5" y2="87.5"/><line x1="13" y1="94.5" x2="17.5" y2="94.5"/><line x1="24" y1="94.5" x2="28.5" y2="94.5"/><line x1="13" y1="100.5" x2="17.5" y2="100.5"/><line x1="24" y1="100.5" x2="28.5" y2="100.5"/><line x1="13" y1="106.5" x2="17.5" y2="106.5"/><line x1="24" y1="106.5" x2="28.5" y2="106.5"/><line x1="13" y1="113.5" x2="17.5" y2="113.5"/><line x1="24" y1="113.5" x2="28.5" y2="113.5"/><line x1="13" y1="119.5" x2="17.5" y2="119.5"/><line x1="24" y1="119.5" x2="28.5" y2="119.5"/><line x1="13" y1="125.5" x2="17.5" y2="125.5"/><line x1="24" y1="125.5" x2="28.5" y2="125.5"/><line x1="13" y1="132.5" x2="17.5" y2="132.5"/><line x1="24" y1="132.5" x2="28.5" y2="132.5"/><line x1="13" y1="138.5" x2="17.5" y2="138.5"/><line x1="24" y1="138.5" x2="28.5" y2="138.5"/><line x1="13" y1="144.5" x2="17.5" y2="144.5"/><line x1="24" y1="144.5" x2="28.5" y2="144.5"/><line x1="13" y1="150.5" x2="17.5" y2="150.5"/><line x1="24" y1="150.5" x2="28.5" y2="150.5"/><line x1="13" y1="157.5" x2="17.5" y2="157.5"/><line x1="24" y1="157.5" x2="28.5" y2="157.5"/><line x1="13" y1="163.5" x2="17.5" y2="163.5"/><line x1="24" y1="163.5" x2="28.5" y2="163.5"/><line x1="13" y1="169.5" x2="17.5" y2="169.5"/><line x1="24" y1="169.5" x2="28.5" y2="169.5"/><line x1="13" y1="176.5" x2="17.5" y2="176.5"/><line x1="24" y1="176.5" x2="28.5" y2="176.5"/><line x1="13" y1="182.5" x2="17.5" y2="182.5"/><line x1="24" y1="182.5" x2="28.5" y2="182.5"/><line x1="13" y1="188.5" x2="17.5" y2="188.5"/><line x1="24" y1="188.5" x2="28.5" y2="188.5"/><line x1="13" y1="195.5" x2="17.5" y2="195.5"/><line x1="24" y1="195.5" x2="28.5" y2="195.5"/><line x1="13" y1="201.5" x2="17.5" y2="201.5"/><line x1="24" y1="201.5" x2="28.5" y2="201.5"/><line x1="40" y1="81.5" x2="44.5" y2="81.5"/><line x1="51" y1="81.5" x2="55.5" y2="81.5"/><line x1="40" y1="87.5" x2="44.5" y2="87.5"/><line x1="51" y1="87.5" x2="55.5" y2="87.5"/><line x1="40" y1="94.5" x2="44.5" y2="94.5"/><line x1="51" y1="94.5" x2="55.5" y2="94.5"/><line x1="40" y1="100.5" x2="44.5" y2="100.5"/><line x1="51" y1="100.5" x2="55.5" y2="100.5"/><line x1="40" y1="106.5" x2="44.5" y2="106.5"/><line x1="51" y1="106.5" x2="55.5" y2="106.5"/><line x1="40" y1="112.5" x2="44.5" y2="112.5"/><line x1="51" y1="112.5" x2="55.5" y2="112.5"/><line x1="40" y1="119.5" x2="44.5" y2="119.5"/><line x1="51" y1="119.5" x2="55.5" y2="119.5"/><line x1="40" y1="125.5" x2="44.5" y2="125.5"/><line x1="51" y1="125.5" x2="55.5" y2="125.5"/><line x1="40" y1="131.5" x2="44.5" y2="131.5"/><line x1="51" y1="131.5" x2="55.5" y2="131.5"/><line x1="40" y1="138.5" x2="44.5" y2="138.5"/><line x1="51" y1="138.5" x2="55.5" y2="138.5"/><line x1="40" y1="144.5" x2="44.5" y2="144.5"/><line x1="51" y1="144.5" x2="55.5" y2="144.5"/><line x1="40" y1="150.5" x2="44.5" y2="150.5"/><line x1="51" y1="150.5" x2="55.5" y2="150.5"/><line x1="40" y1="157.5" x2="44.5" y2="157.5"/><line x1="51" y1="157.5" x2="55.5" y2="157.5"/><line x1="40" y1="163.5" x2="44.5" y2="163.5"/><line x1="51" y1="163.5" x2="55.5" y2="163.5"/><line x1="40" y1="169.5" x2="44.5" y2="169.5"/><line x1="51" y1="169.5" x2="55.5" y2="169.5"/><line x1="40" y1="176.5" x2="44.5" y2="176.5"/><line x1="51" y1="176.5" x2="55.5" y2="176.5"/><line x1="40" y1="182.5" x2="44.5" y2="182.5"/><line x1="51" y1="182.5" x2="55.5" y2="182.5"/><line x1="40" y1="188.5" x2="44.5" y2="188.5"/><line x1="51" y1="188.5" x2="55.5" y2="188.5"/><line x1="40" y1="194.5" x2="44.5" y2="194.5"/><line x1="51" y1="194.5" x2="55.5" y2="194.5"/><line x1="40" y1="201.5" x2="44.5" y2="201.5"/><line x1="51" y1="201.5" x2="55.5" y2="201.5"/><line x1="40" y1="207.5" x2="44.5" y2="207.5"/><line x1="51" y1="207.5" x2="55.5" y2="207.5"/><line x1="69" y1="81.5" x2="73.5" y2="81.5"/><line x1="80" y1="81.5" x2="84.5" y2="81.5"/><line x1="69" y1="90.5" x2="73.5" y2="90.5"/><line x1="80" y1="90.5" x2="84.5" y2="90.5"/><line x1="69" y1="98.5" x2="73.5" y2="98.5"/><line x1="80" y1="98.5" x2="84.5" y2="98.5"/><line x1="69" y1="106.5" x2="73.5" y2="106.5"/><line x1="80" y1="106.5" x2="84.5" y2="106.5"/><line x1="69" y1="115.5" x2="73.5" y2="115.5"/><line x1="80" y1="115.5" x2="84.5" y2="115.5"/><line x1="69" y1="124.5" x2="73.5" y2="124.5"/><line x1="80" y1="124.5" x2="84.5" y2="124.5"/><line x1="69" y1="132.5" x2="73.5" y2="132.5"/><line x1="80" y1="132.5" x2="84.5" y2="132.5"/><line x1="69" y1="140.5" x2="73.5" y2="140.5"/><line x1="80" y1="140.5" x2="84.5" y2="140.5"/><line x1="69" y1="149.5" x2="73.5" y2="149.5"/><line x1="80" y1="149.5" x2="84.5" y2="149.5"/><line x1="69" y1="158.5" x2="73.5" y2="158.5"/><line x1="80" y1="158.5" x2="84.5" y2="158.5"/><line x1="69" y1="166.5" x2="73.5" y2="166.5"/><line x1="80" y1="166.5" x2="84.5" y2="166.5"/><line x1="69" y1="174.5" x2="73.5" y2="174.5"/><line x1="80" y1="174.5" x2="84.5" y2="174.5"/><line x1="69" y1="183.5" x2="73.5" y2="183.5"/><line x1="80" y1="183.5" x2="84.5" y2="183.5"/><line x1="69" y1="192.5" x2="73.5" y2="192.5"/><line x1="80" y1="192.5" x2="84.5" y2="192.5"/><line x1="69" y1="200.5" x2="73.5" y2="200.5"/><line x1="80" y1="200.5" x2="84.5" y2="200.5"/><line x1="41" y1="410.5" x2="45.5" y2="410.5"/><line x1="52" y1="410.5" x2="56.5" y2="410.5"/><line x1="41" y1="416.5" x2="45.5" y2="416.5"/><line x1="52" y1="416.5" x2="56.5" y2="416.5"/><line x1="41" y1="422.5" x2="45.5" y2="422.5"/><line x1="52" y1="422.5" x2="56.5" y2="422.5"/><line x1="41" y1="427.5" x2="45.5" y2="427.5"/><line x1="52" y1="427.5" x2="56.5" y2="427.5"/><line x1="41" y1="433.5" x2="45.5" y2="433.5"/><line x1="52" y1="433.5" x2="56.5" y2="433.5"/><line x1="41" y1="439.5" x2="45.5" y2="439.5"/><line x1="52" y1="439.5" x2="56.5" y2="439.5"/><line x1="41" y1="444.5" x2="45.5" y2="444.5"/><line x1="52" y1="444.5" x2="56.5" y2="444.5"/><line x1="41" y1="450.5" x2="45.5" y2="450.5"/><line x1="52" y1="450.5" x2="56.5" y2="450.5"/><line x1="41" y1="456.5" x2="45.5" y2="456.5"/><line x1="52" y1="456.5" x2="56.5" y2="456.5"/><line x1="41" y1="462.5" x2="45.5" y2="462.5"/><line x1="52" y1="462.5" x2="56.5" y2="462.5"/><line x1="41" y1="467.5" x2="45.5" y2="467.5"/><line x1="52" y1="467.5" x2="56.5" y2="467.5"/><line x1="41" y1="473.5" x2="45.5" y2="473.5"/><line x1="52" y1="473.5" x2="56.5" y2="473.5"/><line x1="41" y1="479.5" x2="45.5" y2="479.5"/><line x1="52" y1="479.5" x2="56.5" y2="479.5"/><line x1="41" y1="484.5" x2="45.5" y2="484.5"/><line x1="52" y1="484.5" x2="56.5" y2="484.5"/><line x1="41" y1="490.5" x2="45.5" y2="490.5"/><line x1="52" y1="490.5" x2="56.5" y2="490.5"/><line x1="41" y1="496.5" x2="45.5" y2="496.5"/><line x1="52" y1="496.5" x2="56.5" y2="496.5"/><line x1="41" y1="501.5" x2="45.5" y2="501.5"/><line x1="52" y1="501.5" x2="56.5" y2="501.5"/><line x1="41" y1="507.5" x2="45.5" y2="507.5"/><line x1="52" y1="507.5" x2="56.5" y2="507.5"/><line x1="41" y1="513.5" x2="45.5" y2="513.5"/><line x1="52" y1="513.5" x2="56.5" y2="513.5"/><line x1="755" y1="99.5" x2="759.5" y2="99.5"/><line x1="766" y1="99.5" x2="770.5" y2="99.5"/><line x1="755" y1="106.5" x2="759.5" y2="106.5"/><line x1="766" y1="106.5" x2="770.5" y2="106.5"/><line x1="755" y1="113.5" x2="759.5" y2="113.5"/><line x1="766" y1="113.5" x2="770.5" y2="113.5"/><line x1="755" y1="120.5" x2="759.5" y2="120.5"/><line x1="766" y1="120.5" x2="770.5" y2="120.5"/><line x1="755" y1="127.5" x2="759.5" y2="127.5"/><line x1="766" y1="127.5" x2="770.5" y2="127.5"/><line x1="755" y1="134.5" x2="759.5" y2="134.5"/><line x1="766" y1="134.5" x2="770.5" y2="134.5"/><line x1="755" y1="141.5" x2="759.5" y2="141.5"/><line x1="766" y1="141.5" x2="770.5" y2="141.5"/><line x1="755" y1="148.5" x2="759.5" y2="148.5"/><line x1="766" y1="148.5" x2="770.5" y2="148.5"/><line x1="755" y1="155.5" x2="759.5" y2="155.5"/><line x1="766" y1="155.5" x2="770.5" y2="155.5"/><line x1="755" y1="162.5" x2="759.5" y2="162.5"/><line x1="766" y1="162.5" x2="770.5" y2="162.5"/><line x1="755" y1="169.5" x2="759.5" y2="169.5"/><line x1="766" y1="169.5" x2="770.5" y2="169.5"/><line x1="755" y1="176.5" x2="759.5" y2="176.5"/><line x1="766" y1="176.5" x2="770.5" y2="176.5"/><line x1="755" y1="183.5" x2="759.5" y2="183.5"/><line x1="766" y1="183.5" x2="770.5" y2="183.5"/><line x1="755" y1="190.5" x2="759.5" y2="190.5"/><line x1="766" y1="190.5" x2="770.5" y2="190.5"/><line x1="755" y1="197.5" x2="759.5" y2="197.5"/><line x1="766" y1="197.5" x2="770.5" y2="197.5"/></g>
<rect x="19" y="81" width="3" height="128" fill="#000"/><rect x="22" y="81" width="1" height="128" fill="#fff"/><polygon points="21,75.5 27.5,81 21,86.5 14.5,81" fill="#d0d0d0" stroke="#000" stroke-width="1"/><rect x="46" y="81" width="3" height="128" fill="#000"/><rect x="49" y="81" width="1" height="128" fill="#fff"/><polygon points="48,171.1 54.5,176.6 48,182.1 41.5,176.6" fill="#d0d0d0" stroke="#000" stroke-width="1"/><rect x="75" y="81" width="3" height="124" fill="#000"/><rect x="78" y="81" width="1" height="124" fill="#fff"/><polygon points="77,203.5 83.5,209 77,214.5 70.5,209" fill="#d0d0d0" stroke="#000" stroke-width="1"/><rect x="47" y="405" width="3" height="113" fill="#000"/><rect x="50" y="405" width="1" height="113" fill="#fff"/><polygon points="49,399.6 55.0,404.6 49,409.6 43.0,404.6" fill="#d0d0d0" stroke="#000" stroke-width="1"/><rect x="761" y="93" width="3" height="110" fill="#000"/><rect x="764" y="93" width="1" height="110" fill="#fff"/><polygon points="763,87.2 769.0,92.7 763,98.2 757.0,92.7" fill="#d0d0d0" stroke="#000" stroke-width="1"/>
<text x="9.7" y="231.5" font-size="14.3" fill="#0a0a10" font-weight="bold">Vol</text><text x="8.7" y="230.5" font-size="14.3" fill="#dcdcdc" font-weight="bold">Vol</text>
<text x="56" y="231.5" font-size="13.5" fill="#0a0a10" font-weight="bold">Gain</text><text x="55" y="230.5" font-size="13.5" fill="#dcdcdc" font-weight="bold">Gain</text>
<text x="27.8" y="246.8" font-size="13.6" fill="#0a0a10" font-weight="bold">Speed</text><text x="26.8" y="245.8" font-size="13.6" fill="#dcdcdc" font-weight="bold">Speed</text>
<text x="21" y="535" font-size="12.5" fill="#1a1a1a" font-weight="bold">Contrast</text><text x="20" y="534" font-size="12.5" fill="#dcdcdc" font-weight="bold">Contrast</text>
<text x="746.5" y="225.5" font-size="14.5" fill="#1a1a1a" font-weight="bold">Base</text><text x="745.5" y="224.5" font-size="14.5" fill="#dcdcdc" font-weight="bold">Base</text>
<text x="752.3" y="256.5" font-size="16" fill="#1a1a1a" font-weight="bold">Hz</text><text x="751.3" y="255.5" font-size="16" fill="#dcdcdc" font-weight="bold">Hz</text>
<circle cx="13" cy="269" r="7.3" fill="#d4d0d0" stroke="#000" stroke-width="1.5"/><path d="M10.5,264.5 A5.5,5.5 0 0 0 10.5,273.5" stroke="#fff" stroke-width="1.6" fill="none"/><text x="28.5" y="274" font-size="12" fill="#1a1a1a" font-weight="bold">Average</text><text x="27.5" y="273" font-size="12" fill="#e4e4e4" font-weight="bold">Average</text><circle cx="13" cy="285" r="7.3" fill="#d4d0d0" stroke="#000" stroke-width="1.5"/><path d="M10.5,280.5 A5.5,5.5 0 0 0 10.5,289.5" stroke="#fff" stroke-width="1.6" fill="none"/><text x="28.5" y="290" font-size="12" fill="#1a1a1a" font-weight="bold">Humid</text><text x="27.5" y="289" font-size="12" fill="#e4e4e4" font-weight="bold">Humid</text><circle cx="13" cy="301" r="7.3" fill="#d4d0d0" stroke="#000" stroke-width="1.5"/><path d="M10.5,296.5 A5.5,5.5 0 0 0 10.5,305.5" stroke="#fff" stroke-width="1.6" fill="none"/><text x="28.5" y="306" font-size="12" fill="#1a1a1a" font-weight="bold">Denoiser</text><text x="27.5" y="305" font-size="12" fill="#e4e4e4" font-weight="bold">Denoiser</text><circle cx="13" cy="317" r="7.3" fill="#d4d0d0" stroke="#000" stroke-width="1.5"/><path d="M10.5,312.5 A5.5,5.5 0 0 0 10.5,321.5" stroke="#fff" stroke-width="1.6" fill="none"/><text x="28.5" y="322" font-size="12" fill="#1a1a1a" font-weight="bold">BandPass</text><text x="27.5" y="321" font-size="12" fill="#e4e4e4" font-weight="bold">BandPass</text><circle cx="13" cy="333" r="7.3" fill="#d4d0d0" stroke="#000" stroke-width="1.5"/><path d="M10.5,328.5 A5.5,5.5 0 0 0 10.5,337.5" stroke="#fff" stroke-width="1.6" fill="none"/><text x="28.5" y="338" font-size="12" fill="#1a1a1a" font-weight="bold">BandRej.</text><text x="27.5" y="337" font-size="12" fill="#e4e4e4" font-weight="bold">BandRej.</text><circle cx="13" cy="349" r="7.3" fill="#d4d0d0" stroke="#000" stroke-width="1.5"/><path d="M10.5,344.5 A5.5,5.5 0 0 0 10.5,353.5" stroke="#fff" stroke-width="1.6" fill="none"/><text x="28.5" y="354" font-size="12" fill="#1a1a1a" font-weight="bold">CW Peak</text><text x="27.5" y="353" font-size="12" fill="#e4e4e4" font-weight="bold">CW Peak</text><circle cx="13" cy="365" r="7.3" fill="#d4d0d0" stroke="#000" stroke-width="1.5"/><path d="M10.5,360.5 A5.5,5.5 0 0 0 10.5,369.5" stroke="#fff" stroke-width="1.6" fill="none"/><text x="28.5" y="370" font-size="12" fill="#1a1a1a" font-weight="bold">Auto brig.</text><text x="27.5" y="369" font-size="12" fill="#e4e4e4" font-weight="bold">Auto brig.</text><circle cx="13" cy="383" r="7.3" fill="#d4d0d0" stroke="#000" stroke-width="1.5"/><path d="M10.5,378.5 A5.5,5.5 0 0 0 10.5,387.5" stroke="#fff" stroke-width="1.6" fill="none"/><text x="28.5" y="388" font-size="12" fill="#1a1a1a" font-weight="bold">PassThru</text><text x="27.5" y="387" font-size="12" fill="#e4e4e4" font-weight="bold">PassThru</text>
<rect x="13" y="542" width="66" height="20" fill="#ece9d8"/>
<path d="M13.5,561.5 V542.5 H78.5" stroke="#fff" fill="none"/><path d="M13.5,561.5 H78.5 V542.5" stroke="#9a9a9a" fill="none"/>
<text x="46" y="556" font-size="12" font-weight="bold" fill="#000" text-anchor="middle">Freeze</text>
<rect x="105" y="572" width="630" height="3" fill="#000"/>
<rect x="105" y="575" width="630" height="1" fill="#fff"/>
<polygon points="187,568.5 192.5,574 187,579.5 181.5,574" fill="#d0d0d0" stroke="#000" stroke-width="1"/>
<rect x="69" y="571.3" width="9" height="3.5" fill="#e4e4e4"/><rect x="77.8" y="570" width="2" height="6.6" fill="#000"/><rect x="69" y="574.7" width="10.8" height="1.9" fill="#000"/>
<polygon points="63.5,573.2 69.2,568.3 69.2,578.2" fill="#ececec"/><path d="M63.8,573.6 L68.6,577.8" stroke="#000" stroke-width="1.4"/>
<rect x="69" y="565" width="2" height="16.6" fill="#000"/>
<rect x="753" y="570.4" width="8.5" height="4.3" fill="#e4e4e4"/><rect x="752" y="570" width="2" height="6.3" fill="#000"/><rect x="752" y="574.5" width="9.5" height="1.8" fill="#000"/>
<polygon points="762,568.4 768,574.5 762,580.6" fill="#ececec"/><path d="M763.5,579 L767.8,575" stroke="#000" stroke-width="1.3"/>
<rect x="760.8" y="565" width="1.6" height="16.6" fill="#000"/>
<text x="11.3" y="605.8" font-size="19.3" font-weight="bold" font-style="italic" fill="#141418" stroke="#141418" stroke-width="0.7" letter-spacing="-0.1">Spectran, by I2PHD and IK2CZL</text>
<text x="10" y="604.5" font-size="19.3" font-weight="bold" font-style="italic" fill="#d4d4d8" stroke="#d4d4d8" stroke-width="0.5" letter-spacing="-0.1">Spectran, by I2PHD and IK2CZL</text>
<rect x="371" y="586" width="100" height="20" fill="#ece9d8"/>
<path d="M371.5,605.5 V586.5 H470.5" stroke="#fff" fill="none"/><path d="M371.5,605.5 H470.5 V586.5" stroke="#9a9a9a" fill="none"/>
<text x="421" y="600" font-size="12" font-weight="bold" fill="#000" text-anchor="middle">Compact View</text>
<rect x="557.5" y="586.5" width="46" height="20" fill="#ece9d8" stroke="#000"/>
<path d="M558.5,605 V587.5 H602" stroke="#fff" fill="none"/><path d="M558.5,605.5 H602.5 V587.5" stroke="#a0a0a0" fill="none"/>
<rect x="561.5" y="590.5" width="38" height="12" fill="none" stroke="#000" stroke-dasharray="1 1"/>
<text x="580.5" y="601" font-size="13" font-weight="bold" fill="#000" text-anchor="middle">Stop</text>
<rect x="613" y="586" width="100" height="20" fill="#ece9d8"/>
<path d="M613.5,605.5 V586.5 H712.5" stroke="#fff" fill="none"/><path d="M613.5,605.5 H712.5 V586.5" stroke="#9a9a9a" fill="none"/>
<text x="662.5" y="600" font-size="11.5" font-weight="bold" fill="#000" text-anchor="middle">Show Controls</text>
<rect x="721" y="586" width="58" height="20" fill="#ece9d8"/>
<path d="M721.5,605.5 V586.5 H778.5" stroke="#fff" fill="none"/><path d="M721.5,605.5 H778.5 V586.5" stroke="#9a9a9a" fill="none"/>
<g fill="none" stroke-linecap="round" stroke-linejoin="round">
<path d="M736.8,592.5 L738.3,600 M737.2,594.2 L733.8,596.6 L730.6,596.8 M738.2,593.8 L741.8,595.8 L742.2,599.2 M738,600 L734.5,602.6 L731.2,605.2 L729.8,605.3 M738.6,600 L741.6,602.6 L742.6,605.3 L743.6,605.3" stroke="#0a4a10" stroke-width="3.6"/>
<path d="M736.8,592.5 L738.3,600 M737.2,594.2 L733.8,596.6 L730.6,596.8 M738.2,593.8 L741.8,595.8 L742.2,599.2 M738,600 L734.5,602.6 L731.2,605.2 M738.6,600 L741.6,602.6 L742.6,605.3" stroke="#38d048" stroke-width="1.8"/>
</g>
<circle cx="737.2" cy="590" r="2.2" fill="#38c048" stroke="#0a4a10" stroke-width="0.9"/>
<text x="751" y="601.5" font-size="13" font-weight="bold" fill="#000">Exit</text>
<rect x="0" y="607" width="790" height="1" fill="#2a62e0"/><rect x="0" y="608" width="790" height="1" fill="#0a4ad4"/><rect x="0" y="609" width="790" height="3" fill="#0038b8"/>
<rect x="0" y="30" width="1" height="582" fill="#0032b0"/><rect x="1" y="30" width="1" height="582" fill="#0a50e0"/><rect x="2" y="30" width="1" height="582" fill="#1262f2"/><rect x="3" y="30" width="1" height="582" fill="#0a58e8"/>
<rect x="784" y="263" width="1" height="300" fill="#c8dcf8"/>
<rect x="785" y="30" width="1" height="582" fill="#3a6ad0"/><rect x="786" y="30" width="1" height="582" fill="#1a50d8"/><rect x="787" y="30" width="1" height="582" fill="#0a44cc"/><rect x="788" y="30" width="1" height="582" fill="#0836b4"/><rect x="789" y="30" width="1" height="582" fill="#0022a0"/>
</svg>
</body></html>
